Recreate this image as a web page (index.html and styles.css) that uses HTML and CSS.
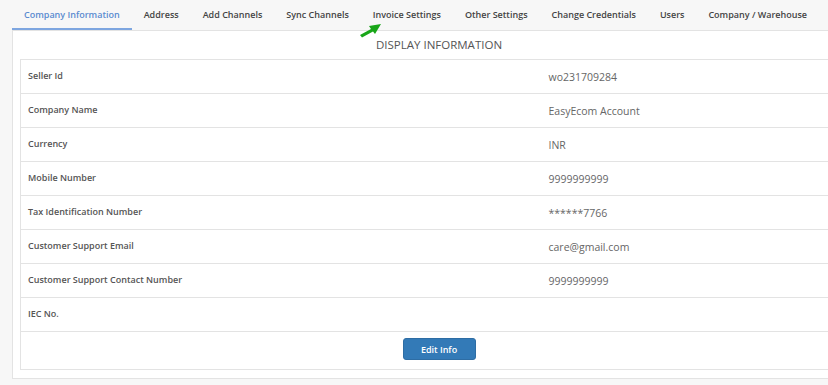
FILE: index.html
```html
<!DOCTYPE html>
<html lang="en">
<head>
    <meta charset="UTF-8">
    <meta name="viewport" content="width=device-width, initial-scale=1.0">
    <title>Company Information</title>
    <link rel="stylesheet" href="styles.css">
</head>
<body>
    <div class="page">
        <ul class="tabs">
            <li class="tab active">Company Information</li>
            <li class="tab">Address</li>
            <li class="tab">Add Channels</li>
            <li class="tab">Sync Channels</li>
            <li class="tab tab-marked">Invoice Settings
                <svg class="arrow" width="26" height="16" viewBox="0 0 26 16">
                    <path d="M2 13 L13 7 L11 4 L23 2 L17 12 L15 9.5 L4 15.5 Z" fill="#19a619"/>
                </svg>
            </li>
            <li class="tab">Other Settings</li>
            <li class="tab">Change Credentials</li>
            <li class="tab">Users</li>
            <li class="tab">Company / Warehouse</li>
        </ul>

        <div class="panel">
            <h4 class="panel-title">DISPLAY INFORMATION</h4>
            <table class="info-table">
                <tr>
                    <td class="label">Seller Id</td>
                    <td class="value">wo231709284</td>
                </tr>
                <tr>
                    <td class="label">Company Name</td>
                    <td class="value">EasyEcom Account</td>
                </tr>
                <tr>
                    <td class="label">Currency</td>
                    <td class="value">INR</td>
                </tr>
                <tr>
                    <td class="label">Mobile Number</td>
                    <td class="value">9999999999</td>
                </tr>
                <tr>
                    <td class="label">Tax Identification Number</td>
                    <td class="value">******7766</td>
                </tr>
                <tr>
                    <td class="label">Customer Support Email</td>
                    <td class="value">care@gmail.com</td>
                </tr>
                <tr>
                    <td class="label">Customer Support Contact Number</td>
                    <td class="value">9999999999</td>
                </tr>
                <tr>
                    <td class="label">IEC No.</td>
                    <td class="value"></td>
                </tr>
                <tr>
                    <td class="actions" colspan="2">
                        <button class="edit-btn">Edit Info</button>
                    </td>
                </tr>
            </table>
        </div>
    </div>
</body>
</html>
```

FILE: styles.css
```css
* {
    margin: 0;
    padding: 0;
    box-sizing: border-box;
}

body {
    font-family: 'Open Sans', sans-serif;
    font-size: 10.5px;
    color: #555;
    background: #f7f7f7;
    overflow: hidden;
}

.page {
    width: 866px;
    padding-left: 12px;
}

.tabs {
    display: flex;
    list-style: none;
    height: 31px;
    border-bottom: 1px solid #e3e3e3;
}

.tab {
    position: relative;
    padding: 0 12px;
    line-height: 30px;
    font-size: 9px;
    font-weight: 600;
    color: #444;
    white-space: nowrap;
}

.tab.active {
    color: #5a8bd0;
    border-bottom: 2px solid #7ea6e0;
}

.arrow {
    position: absolute;
    left: -3px;
    top: 22px;
}

.panel {
    background: white;
    border-left: 1px solid #e3e3e3;
    border-bottom: 1px solid #e3e3e3;
    padding: 0 8px 8px 7px;
}

.panel-title {
    text-align: center;
    font-weight: normal;
    font-size: 11.5px;
    color: #555;
    line-height: 28px;
}

.info-table {
    width: 100%;
    border-collapse: collapse;
    border: 1px solid #e3e3e3;
}

.info-table td {
    height: 34px;
    border-top: 1px solid #e3e3e3;
    vertical-align: middle;
}

.label {
    width: 508px;
    padding: 0 7px 3px;
    font-size: 9px;
    font-weight: 600;
}

.value {
    padding: 1px 8px 0 20px;
    color: #666;
}

.actions {
    text-align: center;
    padding: 0;
}

.info-table .actions {
    height: 38px;
}

.edit-btn {
    font-family: 'Open Sans', sans-serif;
    font-size: 9px;
    font-weight: 600;
    color: white;
    background: #337ab7;
    border: 1px solid #2e6da4;
    border-radius: 3px;
    width: 73px;
    height: 22px;
    margin-bottom: 3px;
}
```
